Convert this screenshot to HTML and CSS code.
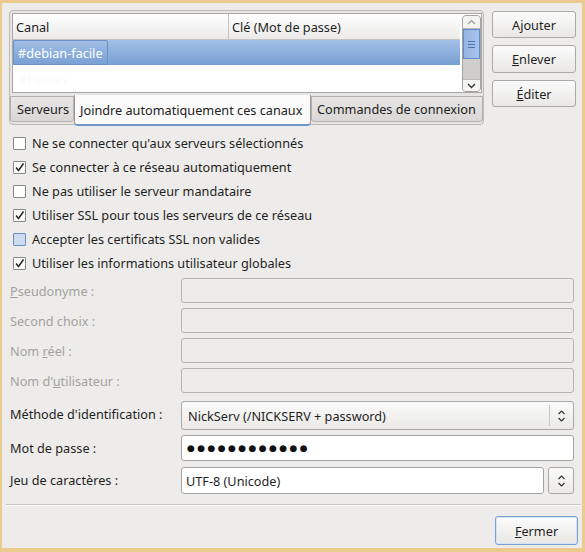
FILE: index.html
```html
<!DOCTYPE html>
<html lang="fr">
<head>
<meta charset="utf-8">
<link rel="stylesheet" href="styles.css">
</head>
<body>
<div class="window">
  <div class="top">
    <div class="notebook">
      <div class="tree">
        <div class="list">
          <div class="header">
            <div class="col c1">Canal</div>
            <div class="col c2">Clé (Mot de passe)</div>
          </div>
          <div class="row selected"><span class="cell">#debian-facile</span></div>
          <div class="row ghost"><span class="ghost-text">#Fusion</span></div>
        </div>
        <div class="scrollbar">
          <div class="sb-btn up"><svg width="9" height="6" viewBox="0 0 9 6"><path d="M1 5 L4.5 1.5 L8 5" fill="none" stroke="#9a9a9a" stroke-width="1.2"/></svg></div>
          <div class="thumb"><span></span><span></span><span></span></div>
          <div class="trough"></div>
          <div class="sb-btn down"><svg width="9" height="6" viewBox="0 0 9 6"><path d="M1 1 L4.5 4.5 L8 1" fill="none" stroke="#333" stroke-width="1.3"/></svg></div>
        </div>
      </div>
      <div class="tabs">
        <div class="tab">Serveurs</div>
        <div class="tab active">Joindre automatiquement ces canaux</div>
        <div class="tab">Commandes de connexion</div>
      </div>
    </div>
    <div class="buttons">
      <div class="btn">A<u>j</u>outer</div>
      <div class="btn"><u>E</u>nlever</div>
      <div class="btn"><u>É</u>diter</div>
    </div>
  </div>

  <div class="checks">
    <div class="check"><span class="box"></span>Ne se connecter qu'aux serveurs sélectionnés</div>
    <div class="check"><span class="box on"><svg width="11" height="11" viewBox="0 0 11 11"><path d="M2 5.5 L4.5 8.5 L9.5 1.5" fill="none" stroke="#222" stroke-width="1.5"/></svg></span>Se connecter à ce réseau automatiquement</div>
    <div class="check"><span class="box"></span>Ne pas utiliser le serveur mandataire</div>
    <div class="check"><span class="box on"><svg width="11" height="11" viewBox="0 0 11 11"><path d="M2 5.5 L4.5 8.5 L9.5 1.5" fill="none" stroke="#222" stroke-width="1.5"/></svg></span>Utiliser SSL pour tous les serveurs de ce réseau</div>
    <div class="check"><span class="box hover"></span>Accepter les certificats SSL non valides</div>
    <div class="check"><span class="box on"><svg width="11" height="11" viewBox="0 0 11 11"><path d="M2 5.5 L4.5 8.5 L9.5 1.5" fill="none" stroke="#222" stroke-width="1.5"/></svg></span>Utiliser les informations utilisateur globales</div>
  </div>

  <div class="form">
    <div class="label dis"><u>P</u>seudonyme :</div><div class="entry dis"></div>
    <div class="label dis">Second choix :</div><div class="entry dis"></div>
    <div class="label dis">Nom <u>r</u>éel :</div><div class="entry dis"></div>
    <div class="label dis">Nom d'<u>u</u>tilisateur :</div><div class="entry dis"></div>
    <div class="label">Méthode d'identification :</div>
    <div class="combo"><span class="combo-text">NickServ (/NICKSERV + password)</span><span class="combo-sep"></span><span class="arrows"><svg width="9" height="14" viewBox="0 0 9 14"><path d="M1.5 5 L4.5 2 L7.5 5 M1.5 9 L4.5 12 L7.5 9" fill="none" stroke="#333" stroke-width="1.2"/></svg></span></div>
    <div class="label">Mot de passe :</div><div class="entry pw">●●●●●●●●●●●●</div>
    <div class="label">Jeu de caractères :</div>
    <div class="charset"><div class="entry cs">UTF-8 (Unicode)</div><div class="cbtn"><svg width="9" height="14" viewBox="0 0 9 14"><path d="M1.5 5 L4.5 2 L7.5 5 M1.5 9 L4.5 12 L7.5 9" fill="none" stroke="#333" stroke-width="1.2"/></svg></div></div>
  </div>

  <div class="sep"></div>
  <div class="footer">
    <div class="btn default"><u>F</u>ermer</div>
  </div>
</div>
</body>
</html>
```

FILE: styles.css
```css
* { box-sizing: border-box; }
html, body { margin: 0; padding: 0; }
body {
  width: 585px;
  height: 552px;
  background: #eccb8f;
  font-family: "Noto Sans", "Open Sans", sans-serif;
  font-size: 12.7px;
  color: #1f1f1f;
  overflow: hidden;
}
.window {
  margin: 3px 3px 0 2px;
  height: 545px;
  background: #edecea;
  padding: 7px 6px 0 7px;
  display: flex;
  flex-direction: column;
}
.top { display: flex; gap: 8px; }
.notebook {
  width: 475px;
  height: 115px;
  border: 1px solid #bdbbb8;
  border-radius: 4px;
  padding: 2px 1px 0 2px;
  background: #e6e5e3;
  display: flex;
  flex-direction: column;
}
.tree {
  display: flex;
  height: 80px;
  background: #fff;
  border: 1px solid #a9a8a6;
}
.list { flex: 1; display: flex; flex-direction: column; }
.header {
  display: flex;
  height: 26px;
  background: linear-gradient(#ffffff, #ebeae9);
  border-bottom: 1px solid #c4c3c1;
}
.col { display: flex; align-items: center; padding-left: 3px; }
.c1 { width: 216px; border-right: 1px solid #c4c3c1; }
.c2 { flex: 1; }
.row { height: 25px; display: flex; align-items: center; }
.selected { background: linear-gradient(#a3c0e6, #779fd3); }
.cell {
  height: 25px;
  display: flex;
  align-items: center;
  padding: 0 4px 0 4px;
  color: #fff;
  border: 1px solid #6b93c8;
  border-radius: 2px;
}
.ghost { height: 27px; }
.ghost-text { color: #fafafa; padding-left: 6px; }
.scrollbar {
  width: 19px;
  margin: 1px 0 0 2px;
  border: 1px solid #a3a2a0;
  border-radius: 4px;
  background: #cfcecc;
  display: flex;
  flex-direction: column;
}
.sb-btn {
  height: 13px;
  background: #f4f4f3;
  display: flex; align-items: center; justify-content: center;
}
.sb-btn.up { border-radius: 3px 3px 0 0; border-bottom: 1px solid #b9b8b6; }
.sb-btn.down { border-radius: 0 0 3px 3px; border-top: 1px solid #b9b8b6; height: 12px; }
.thumb {
  height: 30px;
  background: linear-gradient(90deg, #94b5e3, #a8c4ea);
  border: 1px solid #5f8bc6;
  display: flex; flex-direction: column; align-items: center; justify-content: center; gap: 2px;
}
.thumb span { width: 7px; height: 1px; background: #4d76ad; }
.trough { flex: 1; }
.tabs { display: flex; margin-top: 3px; height: 29px; align-items: flex-start; }
.tab {
  flex-shrink: 0;
  white-space: nowrap;
  height: 26px;
  padding: 0 5px 0 6px;
  display: flex; align-items: center;
  background: linear-gradient(#e7e6e4, #d9d8d6);
  border: 1px solid #b3b1ae;
  border-radius: 0 0 3px 3px;
  color: #222;
}
.tab:first-child { margin-left: -2px; width: 64px; padding-left: 6px; }
.tab.active {
  width: 237px;
  height: 31px;
  margin-top: -1px;
  background: #fbfbfb;
  border: 1px solid #9a9a9a;
  border-top: none;
  border-bottom: 2px solid #6f97cc;
  border-radius: 0 0 4px 4px;
  padding: 0 4px 0 5px;
}
.tabs .tab:last-child { width: 172px; padding-left: 5px; }
.buttons { display: flex; flex-direction: column; gap: 7px; padding-top: 1px; }
.btn {
  width: 84px;
  height: 27px;
  border: 1px solid #acaaa7;
  border-radius: 3px;
  background: linear-gradient(#fbfbfb, #e9e8e6);
  display: flex; align-items: center; justify-content: center;
  color: #1f1f1f;
}
.buttons .btn:nth-child(2) { height: 28px; }
.checks { margin-top: 6px; display: flex; flex-direction: column; padding-left: 4px; }
.check { height: 24px; display: flex; align-items: center; }
.box {
  width: 13px; height: 13px;
  border: 1px solid #8a8987;
  border-radius: 1px;
  background: #fff;
  margin-right: 6px;
  display: flex; align-items: center; justify-content: center;
}
.box.hover { background: #cddcf0; border-color: #6b8fc0; }
.form {
  margin-top: 3px;
  display: grid;
  grid-template-columns: 172px 393px;
  row-gap: 5px;
  align-items: center;
}
.label { padding-left: 1px; white-space: nowrap; }
.label.dis { color: #a3a2a0; }
.entry {
  height: 25px;
  border: 1px solid #a5a4a2;
  border-radius: 3px;
  background: #fff;
  display: flex; align-items: center; padding-left: 4px;
}
.entry.dis { background: #edecea; border-color: #b5b4b2; }
.combo {
  height: 29px;
  margin-top: 3px;
  border: 1px solid #aaa9a7;
  border-radius: 3px;
  background: linear-gradient(#fafafa, #ebeae8);
  display: flex; align-items: center;
}
.combo-text { flex: 1; padding-left: 6px; }
.combo-sep { width: 1px; height: 21px; background: #c8c7c5; }
.arrows { width: 23px; display: flex; justify-content: center; }
.entry.pw {
  height: 26px;
  font-family: "DejaVu Sans", sans-serif;
  font-size: 9px;
  letter-spacing: 2.4px;
  padding-left: 5px;
  color: #111;
}
.charset { display: flex; gap: 4px; height: 27px; margin-top: 1px; }
.entry.cs { flex: 1; height: 27px; padding-left: 4px; }
.cbtn {
  width: 26px; height: 27px;
  border: 1px solid #aaa9a7;
  border-radius: 3px;
  background: linear-gradient(#fafafa, #ebeae8);
  display: flex; align-items: center; justify-content: center;
}
.sep { margin: 10px 0 0 -3px; width: 575px; height: 2px; border-top: 1px solid #c6c5c3; border-bottom: 1px solid #fafafa; }
.footer { display: flex; justify-content: flex-end; padding: 10px 0 0 0; margin-right: -2px; }
.btn.default { width: 83px; height: 29px; border-color: #7a9fd2; box-shadow: inset 0 0 0 1px #d8e4f4; }
```
